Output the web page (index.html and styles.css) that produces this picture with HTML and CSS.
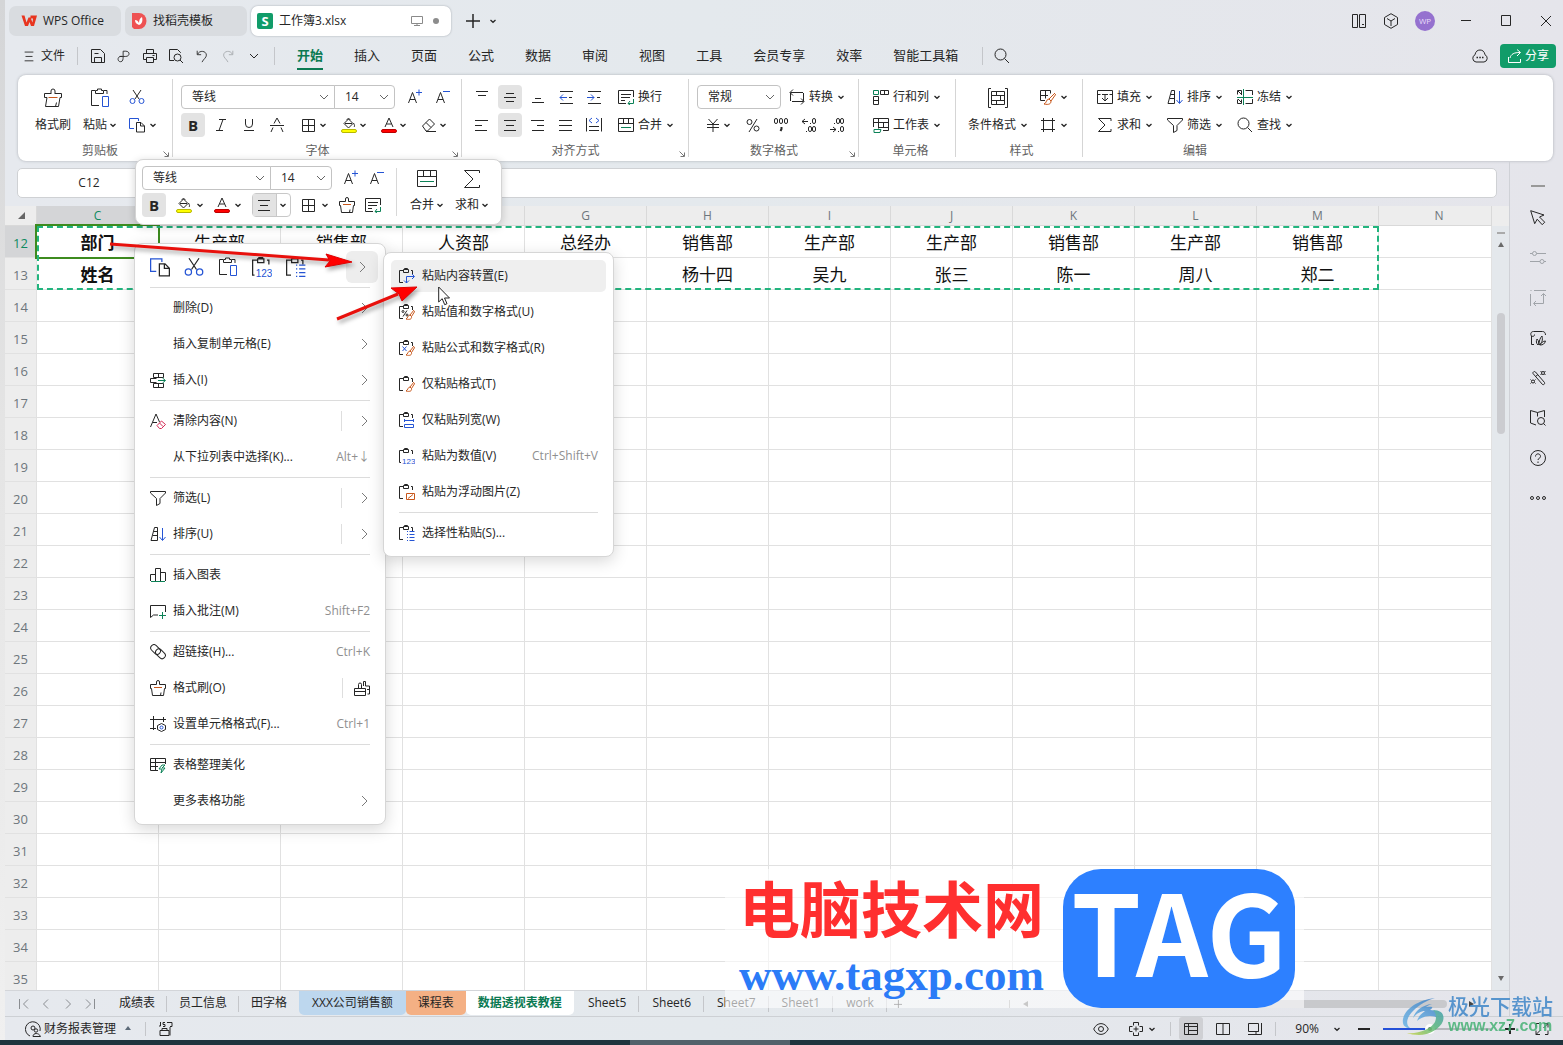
FILE: index.html
```html
<!DOCTYPE html>
<html lang="zh-CN">
<head>
<meta charset="utf-8">
<title>工作簿3.xlsx</title>
<link rel="stylesheet" href="styles.css">
</head>
<body>
<svg class="sprite" aria-hidden="true">
  <symbol id="caret" viewBox="0 0 8 8"><path d="M1.5 3 4 5.3 6.5 3" stroke-width="1.3"/></symbol>
  <symbol id="chev" viewBox="0 0 10 8"><path d="M1 2l4 4 4-4"/></symbol>
  <symbol id="right" viewBox="0 0 8 12"><path d="M2 1l5 5-5 5"/></symbol>
  <symbol id="launch" viewBox="0 0 6 6"><path d="M.5.5l4.500 4.500M5.500 1.500v4h-4"/></symbol>
  <symbol id="brush" viewBox="0 0 20 20"><path d="M8 6V3a2 2 0 0 1 4 0v3M8 5.500H1.500v4H4l-1.500 9h13l1.500-9h1.500v-4H12M12.500 18.500l1-4"/><path class="orange" d="M5.500 9.500h9"/></symbol>
  <symbol id="brush-s" viewBox="0 0 16 16"><path d="M6.500 4.500V2a1.500 1.500 0 0 1 3 0v2.500h6v4h-1l-1 7h-11l-1-7h-1v-4zM10.500 15.500l.5-3"/><path class="orange" d="M4 7.500h8"/></symbol>
  <symbol id="paste" viewBox="0 0 20 20"><path d="M5 2.500H1.500v15H9M14 2.500h3V6M5.500 5.500v-3h2V1h4v1.500h2v3z"/><path class="blue" d="M12.500 8.500h6v10h-6z"/></symbol>
  <symbol id="cut" viewBox="0 0 16 16"><path d="M4 1l6 9M12 1l-6 9"/><g class="blue"><circle cx="3.500" cy="12" r="2.500"/><circle cx="12.500" cy="12" r="2.500"/></g></symbol>
  <symbol id="copy" viewBox="0 0 16 16"><path class="blue" d="M5 11.500H.5v-10h9V4"/><path d="M7.500 5.500H12l3.500 3.500v6h-8zM11.500 5.500V9h4"/></symbol>
  <symbol id="italic" viewBox="0 0 16 16"><path d="M6 2.500h7M3 13.500h7M10 2.500l-4 11"/></symbol>
  <symbol id="under" viewBox="0 0 16 16"><path d="M4.500 2v5a3.500 3.500 0 0 0 7 0V2M3 13.500h10"/></symbol>
  <symbol id="strike" viewBox="0 0 16 16"><path d="M1 8.500h14M5 6.500 8 1 11 6.500M4 10.500 2 15M12 10.500l2 4.500"/></symbol>
  <symbol id="grid4" viewBox="0 0 16 16"><path d="M1.500 2.500h12v12h-12zM7.500 2.500v12M1.500 8.500h12"/></symbol>
  <symbol id="fill" viewBox="0 0 16 16"><path d="M3 6.500 7.500 2 12 6.500 7.500 11zM4 6.500h7M6 3c0-2 3-2 3 0M12.500 6c1 2 1.500 3 .5 4"/><rect x=".5" y="12.500" width="15" height="3" rx="1.500" fill="#ff0" stroke="#b8b800"/></symbol>
  <symbol id="color" viewBox="0 0 16 16"><path d="M4 10l4-9 4 9M5.500 7h5"/><rect x=".5" y="12.500" width="15" height="3" rx="1.500" fill="red" stroke="#b00"/></symbol>
  <symbol id="eraser" viewBox="0 0 16 16"><path d="M1.500 9 8.500 2l5 5-7 7H5zM5 5.500l5 5M5 14.500h10"/></symbol>
  <symbol id="aplus" viewBox="0 0 16 16"><path d="M1.500 14 5.500 3.500 9.500 14M3 10.500h5"/><path class="blue" d="M9 3.500h6M12 .5v6"/></symbol>
  <symbol id="aminus" viewBox="0 0 16 16"><path d="M1.500 14 5.500 3.500 9.500 14M3 10.500h5"/><path class="blue" d="M8 2.500h7"/></symbol>
  <symbol id="vtop" viewBox="0 0 16 16"><path d="M2 2.500h12M4 6.500h8"/></symbol>
  <symbol id="vmid" viewBox="0 0 16 16"><path d="M4 4.500h8M2 8.500h12M4 12.500h8"/></symbol>
  <symbol id="vbot" viewBox="0 0 16 16"><path d="M5 9.500h6M2 13.500h12"/></symbol>
  <symbol id="outdent" viewBox="0 0 16 16"><path d="M2 2.500h13M2 14.500h13M11 8.500h3"/><path class="blue" d="M9 8.500H2M5 5.500l-3 3 3 3"/></symbol>
  <symbol id="indent" viewBox="0 0 16 16"><path d="M2 2.500h13M2 14.500h13M11 8.500h3"/><path class="blue" d="M1 8.500h7M5 5.500l3 3-3 3"/></symbol>
  <symbol id="aleft" viewBox="0 0 16 16"><path d="M1 3.500h13M1 8.500h7M1 13.500h12"/></symbol>
  <symbol id="acenter" viewBox="0 0 16 16"><path d="M2 3.500h12M4 8.500h8M2 13.500h12"/></symbol>
  <symbol id="aright" viewBox="0 0 16 16"><path d="M1 3.500h13M7 8.500h7M2 13.500h12"/></symbol>
  <symbol id="ajust" viewBox="0 0 16 16"><path d="M1 3.500h13M1 8.500h13M1 13.500h13"/></symbol>
  <symbol id="adist" viewBox="0 0 16 16"><path d="M.5 1v13.500M15.500 1v13.500M3 9.500h10M3 13.500h10"/><path class="blue" d="M6 1 3 3.500 6 6M10 1l3 2.500L10 6"/></symbol>
  <symbol id="wrap" viewBox="0 0 16 16"><path d="M8 14.500H.5v-13h15V8M3 5.500h10M3 8.500h9M3 11.500h4"/><path class="green" d="M15.500 10v4.500H10M12 12l-2 2.500 2 1.500"/></symbol>
  <symbol id="merge" viewBox="0 0 16 16"><path d="M.5 1.500h15v13H.5zM.5 6.500h15M5.500 1.500v5M10.500 1.500v5"/><path class="green" d="M3 10.500h10"/></symbol>
  <symbol id="merge-l" viewBox="0 0 20 20"><path d="M.5 1.500h19v16H.5zM.5 7.500h19M6.500 1.500v6M13.500 1.500v6"/><path class="green" d="M3 12.500h14"/></symbol>
  <symbol id="sum-l" viewBox="0 0 20 20"><path d="M17.500 4V1.500h-15L11 10l-8.500 8.500h15V16"/></symbol>
  <symbol id="convert" viewBox="0 0 16 16"><path d="M1.500 12V3.500H14M4 .5l-3 3 3 3M14.500 4v8.500H3M12 9.500l3 3-3 3"/></symbol>
  <symbol id="yen" viewBox="0 0 16 16"><path d="M3.500 2 8 7l4.500-5M8 7v8M2 7.500h12M2 10.500h12"/></symbol>
  <symbol id="percent" viewBox="0 0 16 16"><circle cx="4.500" cy="5" r="2.500"/><circle cx="11.500" cy="11.500" r="2.500"/><path d="M12 2 4 15"/></symbol>
  <symbol id="comma" viewBox="0 0 16 16"><rect x="1.500" y="1.500" width="3" height="5" rx="1.500"/><rect x="6.500" y="1.500" width="3" height="5" rx="1.500"/><rect x="11.500" y="1.500" width="3" height="5" rx="1.500"/><path d="M8.500 10v2L7.500 14" stroke-width="2"/></symbol>
  <symbol id="decup" viewBox="0 0 16 16"><path d="M1 4.500h6M4 2 1 4.500 4 7M9.500 6v1"/><rect x="11.500" y="1.500" width="3" height="5" rx="1.500"/><path d="M5.500 14v1"/><rect x="7.500" y="9.500" width="3" height="5" rx="1.500"/><rect x="11.500" y="9.500" width="3" height="5" rx="1.500"/></symbol>
  <symbol id="decdn" viewBox="0 0 16 16"><path d="M1 12.500h6M4 10l3 2.500L4 15M9.500 14v1M5.500 6v1"/><rect x="11.500" y="9.500" width="3" height="5" rx="1.500"/><rect x="7.500" y="1.500" width="3" height="5" rx="1.500"/><rect x="11.500" y="1.500" width="3" height="5" rx="1.500"/></symbol>
  <symbol id="rowcol" viewBox="0 0 16 16"><path d="M7.500 1.500h8v4h-8zM11.500 1.500v4M.5 7.500h5v8H.5zM.5 11.500h5"/><path class="green" d="M.5 1.500h5v4h-5z"/></symbol>
  <symbol id="sheet" viewBox="0 0 16 16"><path d="M.5 10V1.500h15v12H10M.5 5.500h15M5.500 1.500v10M10.500 5.500v5M5 10.500h10"/><path class="green" d="M1 12.500h7l-1 3H1z"/></symbol>
  <symbol id="cond" viewBox="0 0 20 20"><path d="M3 .5H.5v19H3M17 .5h2.500v19H17M3.500 3.500h13v13h-13zM3.500 7.500h13M3.500 12.500h13M8.500 3.500v4M12.500 7.500v5M8.500 12.500v4"/></symbol>
  <symbol id="tstyle" viewBox="0 0 16 16"><path d="M5 11.500H.5v-10h10v3M.5 6.500H8M5.500 1.500v8"/><path class="orange" d="M15 4 9 10l2 2 5-7M9 10c-3 0-2 4-5 5 5 1 7 0 7-3"/></symbol>
  <symbol id="frame" viewBox="0 0 16 16"><path d="M3.500 1v14M12.500 1v14M1 3.500h14M1 12.500h14"/></symbol>
  <symbol id="fillin" viewBox="0 0 16 16"><path d="M.5 1.500h15v13H.5zM.5 5.500h3M12.500 5.500h3M5 5.500h6M8 5.500V12M5 9l3 3 3-3"/></symbol>
  <symbol id="sort" viewBox="0 0 16 16"><path d="M1 14.500 4.500 1.500h3v13zM3 9.500h4.500M4 5.500h3.500"/><path class="blue" d="M12.500 2v12M9.500 11l3 3.500 3-3.500"/></symbol>
  <symbol id="freeze" viewBox="0 0 16 16"><path d="M8.500 1.500h7V6M15.500 10v4.500h-7M1 2l4 4M1 10l4 4M.5 5.500v-4h4v4M.5 10.500v4h4v-4"/><path class="green" d="M6.500 0v16M0 8.500h16"/></symbol>
  <symbol id="sum" viewBox="0 0 16 16"><path d="M14 4V1.500H1.500L8 8l-6.500 6.500H14V12"/></symbol>
  <symbol id="filter" viewBox="0 0 16 16"><path d="M.5 1.500h15V3L10 8.500v5l-3.500 2v-7L.5 3z"/></symbol>
  <symbol id="find" viewBox="0 0 16 16"><circle cx="6.500" cy="6.500" r="5.500"/><path d="M10.500 10.500 15 15"/></symbol>
  <symbol id="save" viewBox="0 0 16 16"><path d="M1.500 1.500h9l4 4v9h-13zM4.500 14.500v-5h7v5M4.500 5.500h4"/></symbol>
  <symbol id="pdf" viewBox="0 0 16 16"><path d="M6 8.500c-6-1-6 6-2 6 3 0 3-3 3-6V2.500h3c5 0 5 6 0 6H3"/></symbol>
  <symbol id="print" viewBox="0 0 16 16"><path d="M4.500 5V1.500h7V5M4 11.500H1.500v-6h13v6H12M4.500 9.500h7v5h-7zM10.500 7.500h2"/></symbol>
  <symbol id="preview" viewBox="0 0 16 16"><path d="M6 12.500H1.500v-11h8l3 3V5"/><circle cx="9.500" cy="9.500" r="3.500"/><path d="M12 12l3 3"/></symbol>
  <symbol id="undo" viewBox="0 0 16 16"><path d="M2.500 2v4.500H7M3 6c2-5 10-4 10 1 0 3-3 4-5 8"/></symbol>
  <symbol id="pclip" viewBox="0 0 16 16"><path d="M4 2.500H.5v12H4M12 2.500h1.500V6M4.500 4.500v-3h5v3zM5.500 1.500V.5h3v1"/></symbol>
  <symbol id="p-turn" viewBox="0 0 16 16"><use href="#pclip"/><path class="blue" d="M7.500 15V8.500H15M13 6l2.500 2.500L13 11M5 12.500 7.500 15 10 12.500"/></symbol>
  <symbol id="brushlet" viewBox="0 0 16 16"><path class="orange" d="M15 6l-4 5 1.500 1.500L16 7M11 11c-2 0-2 3-4 4 4 1 6 0 5.500-2.500"/></symbol>
  <symbol id="p-pct" viewBox="0 0 16 16"><use href="#pclip"/><use href="#brushlet"/><path d="M8 6.500l-4 6"/><circle cx="4" cy="7.500" r="1"/><circle cx="8" cy="11" r="1"/></symbol>
  <symbol id="p-fx" viewBox="0 0 16 16"><use href="#pclip"/><use href="#brushlet"/><path class="blue" d="M3.500 6.500l4 4.500M7.500 6.500l-4 4.500"/></symbol>
  <symbol id="p-fmt" viewBox="0 0 16 16"><use href="#pclip"/><use href="#brushlet"/></symbol>
  <symbol id="p-col" viewBox="0 0 16 16"><use href="#pclip"/><path class="blue" d="M5.500 7v3M14.500 7v3M5.500 8.500h9M5.500 12.500h9v3h-9z"/></symbol>
  <symbol id="p-123" viewBox="0 0 16 16"><path d="M2 14.500H.5v-12H4M12 2.500h1.500V6M4.500 4.500v-3h5v3zM5.500 1.500V.5h3v1"/><text class="digits" x="3" y="16">123</text></symbol>
  <symbol id="p-img" viewBox="0 0 16 16"><use href="#pclip"/><path class="orange" d="M7.500 9.500h8v6h-8zM9 14.500l5-4"/></symbol>
  <symbol id="p-list" viewBox="0 0 16 16"><use href="#pclip"/><path class="blue" d="M8 6.500h1M10.500 6.500h5M8 9.500h1M10.500 9.500h5M8 12.500h1M10.500 12.500h5M8 15.500h1M10.500 15.500h5"/></symbol>
  <symbol id="insert" viewBox="0 0 16 16"><path d="M8 5.500H3.500v-4h10v4H8zM8.500 1.500v4M6.500 10.500h-6v-4h6M3.500 11.500h10v4h-10zM8.500 11.500v4"/><path class="green" d="M8 8.500h7M12.500 6l3 2.500-3 2.500"/></symbol>
  <symbol id="clear" viewBox="0 0 16 16"><path d="M.5 14 6 1l3.500 8M3 9.500h4"/><path class="red" d="M7 12.500 11.500 8l4 3.500-4 4H9.500zM9.500 10l3.500 3.500"/></symbol>
  <symbol id="chart" viewBox="0 0 16 16"><path d="M.5 14V7.500h5M5.500 14V1.500h5V14M10.500 5.500h5V14"/><path class="green" d="M1 14.500h14"/></symbol>
  <symbol id="note" viewBox="0 0 16 16"><path d="M15.500 9V2.500H.5v12l3-2.500H8"/><path class="green" d="M9 12.500h7M12.500 9v7"/></symbol>
  <symbol id="link" viewBox="0 0 16 16"><rect x="-1" y="2" width="11" height="6.500" rx="3.250" transform="rotate(45 4 5) translate(1 -1)"/><rect x="5" y="7" width="11" height="6.500" rx="3.250" transform="rotate(45 11 10)"/></symbol>
  <symbol id="brushes" viewBox="0 0 16 16"><path d="M.5 8.500h11v7H.5zM.5 11.500h11M4.500 8.500V4.500a1.500 1.500 0 0 1 3 0v4M9.500 6V1.500h2V6h4v8H13.500M13 9.500h2.500"/></symbol>
  <symbol id="cellfmt" viewBox="0 0 16 16"><path d="M3.500 0v14M0 3.500h16M0 12.500h6M13.500 1v5"/><path d="M11.500 7.500l4 2v4l-4 2-4-2v-4z"/><circle class="blue" cx="11.500" cy="11.500" r="1.500"/></symbol>
  <symbol id="beauty" viewBox="0 0 16 16"><path d="M8 13.500H.5v-12h15V7M.5 5.500h15M.5 9.500H8M5.500 1.500v12"/><path class="green" d="M12 8l-3 4h3l-1 4 4-5h-3l3-3z"/></symbol>
  <symbol id="menu" viewBox="0 0 16 16"><path d="M3 3.500h10M4 8.500h8M3 13.500h10"/></symbol>
  <symbol id="plus" viewBox="0 0 16 16"><path d="M1 8h14M8 1v14" stroke-width="1.500"/></symbol>
  <symbol id="screen" viewBox="0 0 12 12"><path d="M.5 1.500h11v7H.5zM6 8.500v2M3 10.500h6"/></symbol>
  <symbol id="panes" viewBox="0 0 16 16"><path d="M1.500 1.500h5v13h-5zM8.500 1.500h6v13h-6zM11 11.500h2"/></symbol>
  <symbol id="cube" viewBox="0 0 16 16"><path d="M8 .7l6.500 3.800v7L8 15.300 1.500 11.500v-7zM4 5.500 8 8l4-2.500M8 8v5"/></symbol>
  <symbol id="min" viewBox="0 0 16 16"><path d="M3 7.500h10"/></symbol>
  <symbol id="max" viewBox="0 0 16 16"><path d="M3.500 2.500h9v10h-9z"/></symbol>
  <symbol id="close" viewBox="0 0 16 16"><path d="M3 3l10 10M13 3 3 13"/></symbol>
  <symbol id="cloud" viewBox="0 0 16 16"><path d="M4 14a3.800 3.800 0 0 1-1-7.200C3.500 3.500 5.500 2 8 2s4.500 1.500 5 4.800A3.800 3.800 0 0 1 12 14z"/><path d="M4.500 9.500H6M7.300 9.500h1.500M10 9.500h1.500" stroke-width="1.500"/></symbol>
  <symbol id="share" viewBox="0 0 16 16"><path d="M1.500 9v5.500h12V11M3 10c1-4 4-5.500 10-5.500M10 1.500l3.500 3L10 8"/></symbol>
  <symbol id="pointer" viewBox="0 0 16 16"><path d="M.7.7l4 13 2.500-4.500 5 5.500 2.500-2.500L9.500 7l4.500-2z"/></symbol>
  <symbol id="tune" viewBox="0 0 16 16"><path d="M0 3.500h2.500M6.500 3.500H16M0 11.500h10M14 11.500h2"/><circle cx="4.500" cy="3.500" r="2"/><circle cx="12" cy="11.500" r="2"/></symbol>
  <symbol id="axis" viewBox="0 0 16 16"><path d="M.5 4v12M4 .5h12M.5.5h1M13.500 4v9.500H4M11 6l2.500-2.500L16 6M6 11l-2.500 2.500L6 16"/></symbol>
  <symbol id="skin" viewBox="0 0 16 16"><path d="M4 14.500H1.500V6C0 4 1 1.500 3.500 1.500h9C14.500 1.500 15.500 3 15.500 5M1.500 6c2 1 3 0 3-1.500M8 15c-2-2-2-4-1-6 2 2 2 4 1 6zM9 15c0-4 1-7 3-9 1 4 0 7-3 9zM10 15c1-2 3-4 5.500-4-1 3-2.500 4-5.500 4z"/></symbol>
  <symbol id="wand" viewBox="0 0 16 16"><path d="M3 3.500a1.500 1.500 0 0 1 2.500-1.500l9 10.500a1.500 1.500 0 0 1-2 2zM5.500 6.500l2.500-2"/><circle cx="13" cy="3" r="1.500"/><circle cx="3" cy="11.500" r="1.500"/><path d="M10.500 1l1 1M15.500 1l-1 1M10.500 5l1-1M15.500 5l-1-1M.5 9.500l1 1M5.500 9.500l-1 1M.5 13.500l1-1M5.500 13.500l-1-1"/></symbol>
  <symbol id="book" viewBox="0 0 16 16"><path d="M6 15 .5 13V.5L7.500 2.500v4M7.500 2.500l7-2V7"/><circle cx="11" cy="11" r="3.500"/><path d="M13.500 13.500l2 2"/></symbol>
  <symbol id="help" viewBox="0 0 16 16"><circle cx="8" cy="8" r="7.500"/><path d="M5.500 6.500c0-3.500 5-3.500 5 0 0 2-2.500 1.500-2.500 3.500M8 11.500v1.500"/></symbol>
  <symbol id="more" viewBox="0 0 16 16"><circle cx="2" cy="8" r="1.500"/><circle cx="8" cy="8" r="1.500"/><circle cx="14" cy="8" r="1.500"/></symbol>
  <symbol id="eye" viewBox="0 0 16 16"><path d="M.7 8C4 .8 12 .8 15.300 8 12 15.200 4 15.200.7 8z"/><circle cx="8" cy="8" r="2.500"/></symbol>
  <symbol id="cross" viewBox="0 0 16 16"><path d="M5.500 4.500v-3h5v3M5.500 11.500v3h5v-3M4.500 5.500h-3v5h3M11.500 5.500h3v5h-3M8 5.500v5M5.500 8h5"/></symbol>
  <symbol id="vnorm" viewBox="0 0 16 16"><path d="M1.500 2.500h13v11h-13zM1.500 5.500h13M5.500 2.500v11M5.500 9.500h9"/></symbol>
  <symbol id="vpage" viewBox="0 0 16 16"><path d="M1.500 2.500h13v11h-13zM8 2.500v11"/></symbol>
  <symbol id="vread" viewBox="0 0 16 16"><path d="M1.500 2.500h10v8h-10zM14.500 2v11.500H1M9 13.500v-3h2.500"/></symbol>
  <symbol id="full" viewBox="0 0 16 16"><path d="M10 2.500h4v4M14 2.500 9.500 7M6 13.500H2v-4M2 13.500 6.500 9M2 6.500v-4h3M14 9.500v4h-3"/></symbol>
  <symbol id="finance" viewBox="0 0 16 16"><path d="M5 15A7.400 7.400 0 1 1 15 10"/><circle cx="8" cy="7" r="2"/><circle cx="11" cy="9.500" r="1.700"/><path d="M8 15.500c0-4 6-4 7.500 0z"/></symbol>
  <symbol id="js" viewBox="0 0 16 16"><path d="M3.500 1v4H2M8 1.500H6v2h2v2H6M10 1.500h5v4h-2M13 6v8.500M3 14.500h9v-5H3zM5 9.500V7.500h5v2"/></symbol>
</svg>

<div class="app">
  <header class="titlebar">
    <a class="tab" href="#"><svg class="i" viewBox="0 0 16 16"><path d="M.5 2.500h3l2 7 2-5h2l2 5 .5-4h-2.500V2.500H16L13 13h-3L8.500 9 7 13H4z" fill="#e8351f" stroke="none"/></svg>WPS Office</a>
    <a class="tab tab-dk" href="#"><svg class="i" viewBox="0 0 16 16"><path d="M1 0h7a7.500 8 0 0 1 0 16H3l-2-2z" fill="#ee5253" stroke="none"/><path d="M8 12C5 11 4 9 4 7c2 0 3 1 4 3 0-3 1-5 3-6 1 4 0 7-3 8z" fill="#fff" stroke="none"/></svg>找稻壳模板</a>
    <a class="tab tab-on" href="#"><b class="s-logo">S</b><span class="grow">工作簿3.xlsx</span><svg class="i i12 mute"><use href="#screen"/></svg><i class="dot"></i></a>
    <button class="ib new" aria-label="新建"><svg class="i"><use href="#plus"/></svg></button>
    <button class="ib" aria-label="列表"><svg class="i i8"><use href="#caret"/></svg></button>
    <span class="grow"></span>
    <div class="winbtns">
      <button class="ib" aria-label="分栏"><svg class="i"><use href="#panes"/></svg></button>
      <button class="ib" aria-label="应用"><svg class="i"><use href="#cube"/></svg></button>
      <span class="avatar">WP</span>
    </div>
    <div class="winbtns wide">
      <button class="ib" aria-label="最小化"><svg class="i"><use href="#min"/></svg></button>
      <button class="ib" aria-label="最大化"><svg class="i"><use href="#max"/></svg></button>
      <button class="ib" aria-label="关闭"><svg class="i"><use href="#close"/></svg></button>
    </div>
  </header>

  <nav class="menubar">
    <button class="file"><svg class="i"><use href="#menu"/></svg>文件</button>
    <i class="vr"></i>
    <div class="quick">
      <button class="ib" aria-label="保存"><svg class="i"><use href="#save"/></svg></button>
      <button class="ib" aria-label="输出"><svg class="i i14"><use href="#pdf"/></svg></button>
      <button class="ib" aria-label="打印"><svg class="i"><use href="#print"/></svg></button>
      <button class="ib" aria-label="预览"><svg class="i"><use href="#preview"/></svg></button>
      <button class="ib" aria-label="撤销"><svg class="i i14"><use href="#undo"/></svg></button>
      <button class="ib flip" aria-label="恢复"><svg class="i i14"><use href="#undo"/></svg></button>
      <button class="ib" aria-label="更多"><svg class="i i10"><use href="#chev"/></svg></button>
    </div>
    <i class="vr"></i>
    <div class="tabs">
      <a class="on" href="#">开始</a><a href="#">插入</a><a href="#">页面</a><a href="#">公式</a><a href="#">数据</a><a href="#">审阅</a><a href="#">视图</a><a href="#">工具</a><a href="#">会员专享</a><a href="#">效率</a><a href="#">智能工具箱</a>
    </div>
    <i class="vr"></i>
    <button class="ib search" aria-label="搜索"><svg class="i"><use href="#find"/></svg></button>
    <span class="grow"></span>
    <button class="ib" aria-label="云"><svg class="i"><use href="#cloud"/></svg></button>
    <button class="share"><svg class="i"><use href="#share"/></svg>分享</button>
  </nav>

  <section class="ribbon">
    <div class="group g-clip">
      <div class="ctl">
        <button class="big"><svg class="i i20"><use href="#brush"/></svg><span>格式刷</span></button>
        <button class="big"><svg class="i i20"><use href="#paste"/></svg><span>粘贴<svg class="i i8"><use href="#caret"/></svg></span></button>
        <div class="stack">
          <div class="row"><button class="lb" aria-label="剪切"><svg class="i"><use href="#cut"/></svg></button></div>
          <div class="row"><button class="lb" aria-label="复制"><svg class="i"><use href="#copy"/></svg><svg class="i i8"><use href="#caret"/></svg></button></div>
        </div>
      </div>
      <div class="gl"><span>剪贴板</span><svg class="i i6"><use href="#launch"/></svg></div>
    </div>
    <div class="group g-font">
      <div class="stack">
        <div class="row r4">
          <div class="fields">
            <label class="sel w-font"><select aria-label="字体"><option>等线</option></select><svg class="i i10"><use href="#chev"/></svg></label>
            <label class="sel w-size"><select aria-label="字号"><option>14</option></select><svg class="i i10"><use href="#chev"/></svg></label>
          </div>
          <button class="sq first" aria-label="增大字号"><svg class="i"><use href="#aplus"/></svg></button>
          <button class="sq" aria-label="减小字号"><svg class="i"><use href="#aminus"/></svg></button>
        </div>
        <div class="row r4">
          <button class="sq on bold">B</button>
          <button class="sq" aria-label="倾斜"><svg class="i"><use href="#italic"/></svg></button>
          <button class="sq" aria-label="下划线"><svg class="i"><use href="#under"/></svg></button>
          <button class="sq" aria-label="删除线"><svg class="i"><use href="#strike"/></svg></button>
          <button class="drop" aria-label="边框"><svg class="i"><use href="#grid4"/></svg><svg class="i i8"><use href="#caret"/></svg></button>
          <button class="drop" aria-label="填充颜色"><svg class="i"><use href="#fill"/></svg><svg class="i i8"><use href="#caret"/></svg></button>
          <button class="drop" aria-label="字体颜色"><svg class="i"><use href="#color"/></svg><svg class="i i8"><use href="#caret"/></svg></button>
          <button class="drop" aria-label="清除"><svg class="i"><use href="#eraser"/></svg><svg class="i i8"><use href="#caret"/></svg></button>
        </div>
      </div>
      <div class="gl"><span>字体</span><svg class="i i6"><use href="#launch"/></svg></div>
    </div>
    <div class="group g-align">
      <div class="stack">
        <div class="row r4">
          <button class="sq" aria-label="顶端对齐"><svg class="i"><use href="#vtop"/></svg></button>
          <button class="sq on" aria-label="垂直居中"><svg class="i"><use href="#vmid"/></svg></button>
          <button class="sq" aria-label="底端对齐"><svg class="i"><use href="#vbot"/></svg></button>
          <button class="sq" aria-label="减少缩进"><svg class="i"><use href="#outdent"/></svg></button>
          <button class="sq" aria-label="增加缩进"><svg class="i"><use href="#indent"/></svg></button>
          <button class="lb first"><svg class="i"><use href="#wrap"/></svg>换行</button>
        </div>
        <div class="row r4">
          <button class="sq" aria-label="左对齐"><svg class="i"><use href="#aleft"/></svg></button>
          <button class="sq on" aria-label="水平居中"><svg class="i"><use href="#acenter"/></svg></button>
          <button class="sq" aria-label="右对齐"><svg class="i"><use href="#aright"/></svg></button>
          <button class="sq" aria-label="两端对齐"><svg class="i"><use href="#ajust"/></svg></button>
          <button class="sq" aria-label="分散对齐"><svg class="i"><use href="#adist"/></svg></button>
          <button class="lb first"><svg class="i"><use href="#merge"/></svg>合并<svg class="i i8"><use href="#caret"/></svg></button>
        </div>
      </div>
      <div class="gl"><span>对齐方式</span><svg class="i i6"><use href="#launch"/></svg></div>
    </div>
    <div class="group g-num">
      <div class="stack">
        <div class="row r8">
          <label class="sel w-num"><select aria-label="数字格式"><option>常规</option></select><svg class="i i10"><use href="#chev"/></svg></label>
          <button class="lb"><svg class="i"><use href="#convert"/></svg>转换<svg class="i i8"><use href="#caret"/></svg></button>
        </div>
        <div class="row r4">
          <button class="drop" aria-label="货币"><svg class="i"><use href="#yen"/></svg><svg class="i i8"><use href="#caret"/></svg></button>
          <button class="sq pct" aria-label="百分比"><svg class="i"><use href="#percent"/></svg></button>
          <button class="sq" aria-label="千位分隔"><svg class="i"><use href="#comma"/></svg></button>
          <button class="sq" aria-label="增加小数位"><svg class="i"><use href="#decup"/></svg></button>
          <button class="sq" aria-label="减少小数位"><svg class="i"><use href="#decdn"/></svg></button>
        </div>
      </div>
      <div class="gl"><span>数字格式</span><svg class="i i6"><use href="#launch"/></svg></div>
    </div>
    <div class="group g-cell">
      <div class="stack">
        <div class="row"><button class="lb"><svg class="i"><use href="#rowcol"/></svg>行和列<svg class="i i8"><use href="#caret"/></svg></button></div>
        <div class="row"><button class="lb"><svg class="i"><use href="#sheet"/></svg>工作表<svg class="i i8"><use href="#caret"/></svg></button></div>
      </div>
      <div class="gl"><span>单元格</span></div>
    </div>
    <div class="group g-style">
      <div class="ctl">
        <button class="big"><svg class="i i20"><use href="#cond"/></svg><span>条件格式<svg class="i i8"><use href="#caret"/></svg></span></button>
        <div class="stack">
          <div class="row"><button class="lb" aria-label="表格样式"><svg class="i"><use href="#tstyle"/></svg><svg class="i i8"><use href="#caret"/></svg></button></div>
          <div class="row"><button class="lb" aria-label="单元格样式"><svg class="i"><use href="#frame"/></svg><svg class="i i8"><use href="#caret"/></svg></button></div>
        </div>
      </div>
      <div class="gl"><span>样式</span></div>
    </div>
    <div class="group g-edit">
      <div class="stack">
        <div class="row r14">
          <button class="lb"><svg class="i"><use href="#fillin"/></svg>填充<svg class="i i8"><use href="#caret"/></svg></button>
          <button class="lb"><svg class="i"><use href="#sort"/></svg>排序<svg class="i i8"><use href="#caret"/></svg></button>
          <button class="lb"><svg class="i"><use href="#freeze"/></svg>冻结<svg class="i i8"><use href="#caret"/></svg></button>
        </div>
        <div class="row r14">
          <button class="lb"><svg class="i"><use href="#sum"/></svg>求和<svg class="i i8"><use href="#caret"/></svg></button>
          <button class="lb"><svg class="i"><use href="#filter"/></svg>筛选<svg class="i i8"><use href="#caret"/></svg></button>
          <button class="lb"><svg class="i"><use href="#find"/></svg>查找<svg class="i i8"><use href="#caret"/></svg></button>
        </div>
      </div>
      <div class="gl"><span>编辑</span></div>
    </div>
  </section>

  <div class="work">
    <main class="main">
      <div class="formula">
        <input class="namebox" aria-label="名称框" value="C12">
        <input class="fx" aria-label="编辑栏">
      </div>
      <div class="gridrow">
        <div class="sheet">
          <table>
            <colgroup><col class="c-h"><col class="c"><col class="c"><col class="c"><col class="c"><col class="c"><col class="c"><col class="c"><col class="c"><col class="c"><col class="c"><col class="c"><col></colgroup>
            <thead><tr><th><i class="corner"></i></th><th class="cur">C</th><th>D</th><th>E</th><th>F</th><th>G</th><th>H</th><th>I</th><th>J</th><th>K</th><th>L</th><th>M</th><th>N</th></tr></thead>
            <tbody>
            <tr><th class="cur">12</th><td class="b">部门</td><td>生产部</td><td>销售部</td><td>人资部</td><td>总经办</td><td>销售部</td><td>生产部</td><td>生产部</td><td>销售部</td><td>生产部</td><td>销售部</td><td></td></tr>
            <tr><th>13</th><td class="b">姓名</td><td></td><td></td><td></td><td></td><td>杨十四</td><td>吴九</td><td>张三</td><td>陈一</td><td>周八</td><td>郑二</td><td></td></tr>
            <tr><th>14<td><td><td><td><td><td><td><td><td><td><td><td></tr>
            <tr><th>15<td><td><td><td><td><td><td><td><td><td><td><td></tr>
            <tr><th>16<td><td><td><td><td><td><td><td><td><td><td><td></tr>
            <tr><th>17<td><td><td><td><td><td><td><td><td><td><td><td></tr>
            <tr><th>18<td><td><td><td><td><td><td><td><td><td><td><td></tr>
            <tr><th>19<td><td><td><td><td><td><td><td><td><td><td><td></tr>
            <tr><th>20<td><td><td><td><td><td><td><td><td><td><td><td></tr>
            <tr><th>21<td><td><td><td><td><td><td><td><td><td><td><td></tr>
            <tr><th>22<td><td><td><td><td><td><td><td><td><td><td><td></tr>
            <tr><th>23<td><td><td><td><td><td><td><td><td><td><td><td></tr>
            <tr><th>24<td><td><td><td><td><td><td><td><td><td><td><td></tr>
            <tr><th>25<td><td><td><td><td><td><td><td><td><td><td><td></tr>
            <tr><th>26<td><td><td><td><td><td><td><td><td><td><td><td></tr>
            <tr><th>27<td><td><td><td><td><td><td><td><td><td><td><td></tr>
            <tr><th>28<td><td><td><td><td><td><td><td><td><td><td><td></tr>
            <tr><th>29<td><td><td><td><td><td><td><td><td><td><td><td></tr>
            <tr><th>30<td><td><td><td><td><td><td><td><td><td><td><td></tr>
            <tr><th>31<td><td><td><td><td><td><td><td><td><td><td><td></tr>
            <tr><th>32<td><td><td><td><td><td><td><td><td><td><td><td></tr>
            <tr><th>33<td><td><td><td><td><td><td><td><td><td><td><td></tr>
            <tr><th>34<td><td><td><td><td><td><td><td><td><td><td><td></tr>
            <tr><th>35<td><td><td><td><td><td><td><td><td><td><td><td></tr>
            </tbody>
          </table>
          <div class="cursor-cell"></div>
          <div class="ants"></div>
        </div>
        <div class="vscroll"><i class="split"></i><i class="tri up"></i><i class="thumb"></i><i class="tri down"></i></div>
      </div>
      <div class="sheetbar">
        <div class="nav">
          <button class="ib" aria-label="首个"><svg class="i" viewBox="0 0 16 16"><path d="M3.500 3v10M12 3.500 7.500 8l4.500 4.500"/></svg></button>
          <button class="ib" aria-label="上一个"><svg class="i" viewBox="0 0 16 16"><path d="M10 3.500 5.500 8l4.500 4.500"/></svg></button>
          <button class="ib" aria-label="下一个"><svg class="i" viewBox="0 0 16 16"><path d="M6 3.500 10.500 8 6 12.500"/></svg></button>
          <button class="ib" aria-label="末个"><svg class="i" viewBox="0 0 16 16"><path d="M12.500 3v10M4 3.500 8.500 8 4 12.500"/></svg></button>
        </div>
        <a class="st" href="#">成绩表</a><a class="st" href="#">员工信息</a><a class="st last" href="#">田字格</a><a class="st blue-tab" href="#">XXX公司销售额</a><a class="st orange-tab" href="#">课程表</a><a class="st cur-tab" href="#">数据透视表教程</a><a class="st" href="#">Sheet5</a><a class="st" href="#">Sheet6</a><a class="st" href="#">Sheet7</a><a class="st" href="#">Sheet1</a><a class="st" href="#">work</a>
        <button class="ib add" aria-label="新建工作表"><svg class="i i10" viewBox="0 0 10 10"><path d="M0 5.500h10M5.500 0v10"/></svg></button>
        <div class="hscroll"><i class="hbar"></i><i class="tri left"></i><i class="hthumb"></i><i class="tri rightward"></i></div>
      </div>
    </main>
    <aside class="side">
      <button class="ib" aria-label="收起"><svg class="i" viewBox="0 0 16 16"><path d="M1 8h14" stroke-width="2"/></svg></button>
      <button class="ib" aria-label="选择"><svg class="i"><use href="#pointer"/></svg></button>
      <button class="ib dim" aria-label="属性"><svg class="i"><use href="#tune"/></svg></button>
      <button class="ib dim" aria-label="分析"><svg class="i"><use href="#axis"/></svg></button>
      <button class="ib" aria-label="美化"><svg class="i"><use href="#skin"/></svg></button>
      <button class="ib" aria-label="工具"><svg class="i"><use href="#wand"/></svg></button>
      <button class="ib" aria-label="查阅"><svg class="i"><use href="#book"/></svg></button>
      <button class="ib" aria-label="帮助"><svg class="i"><use href="#help"/></svg></button>
      <button class="ib" aria-label="更多"><svg class="i"><use href="#more"/></svg></button>
    </aside>
  </div>

  <footer class="status">
    <button class="lb fin"><svg class="i"><use href="#finance"/></svg>财务报表管理</button><i class="tri small"></i>
    <i class="vr"></i>
    <button class="ib" aria-label="脚本"><svg class="i"><use href="#js"/></svg></button>
    <span class="grow"></span>
    <button class="ib s-eye" aria-label="护眼"><svg class="i"><use href="#eye"/></svg></button>
    <button class="lb" aria-label="阅读"><svg class="i"><use href="#cross"/></svg><svg class="i i8"><use href="#caret"/></svg></button>
    <i class="vr"></i>
    <button class="vb on" aria-label="普通"><svg class="i"><use href="#vnorm"/></svg></button>
    <button class="vb" aria-label="分页"><svg class="i"><use href="#vpage"/></svg></button>
    <button class="vb" aria-label="阅读版式"><svg class="i"><use href="#vread"/></svg></button>
    <i class="vr"></i>
    <button class="zoom">90%<svg class="i i8"><use href="#caret"/></svg></button>
    <button class="ib" aria-label="缩小"><svg class="i i12" viewBox="0 0 12 12"><path d="M0 6h12" stroke-width="2"/></svg></button>
    <input class="range" type="range" min="0" max="100" value="43" aria-label="缩放">
    <button class="ib" aria-label="放大"><svg class="i i12" viewBox="0 0 12 12"><path d="M1 6h10M6 1v10" stroke-width="2"/></svg></button>
    <button class="ib s-full" aria-label="全屏"><svg class="i"><use href="#full"/></svg></button>
  </footer>
</div>
<div class="taskbar"><i></i></div>

<div class="minibar">
  <div class="mini-left">
    <div class="row24">
      <div class="fields">
        <label class="sel m-font"><select aria-label="字体"><option>等线</option></select><svg class="i i10"><use href="#chev"/></svg></label>
        <label class="sel m-size"><select aria-label="字号"><option>14</option></select><svg class="i i10"><use href="#chev"/></svg></label>
      </div>
      <button class="sq first" aria-label="增大字号"><svg class="i"><use href="#aplus"/></svg></button>
      <button class="sq" aria-label="减小字号"><svg class="i"><use href="#aminus"/></svg></button>
    </div>
    <div class="row24 r10">
      <button class="sq on bold">B</button>
      <button class="lb" aria-label="填充颜色"><svg class="i"><use href="#fill"/></svg><svg class="i i8"><use href="#caret"/></svg></button>
      <button class="lb" aria-label="字体颜色"><svg class="i"><use href="#color"/></svg><svg class="i i8"><use href="#caret"/></svg></button>
      <button class="splitbtn" aria-label="居中"><span><svg class="i"><use href="#acenter"/></svg></span><svg class="i i8"><use href="#caret"/></svg></button>
      <button class="lb" aria-label="边框"><svg class="i"><use href="#grid4"/></svg><svg class="i i8"><use href="#caret"/></svg></button>
      <button class="lb" aria-label="格式刷"><svg class="i"><use href="#brush-s"/></svg></button>
      <button class="lb" aria-label="换行"><svg class="i"><use href="#wrap"/></svg></button>
    </div>
  </div>
  <i class="mvr"></i>
  <button class="big mbig"><svg class="i i20"><use href="#merge-l"/></svg><span>合并<svg class="i i8"><use href="#caret"/></svg></span></button>
  <button class="big mbig"><svg class="i i20"><use href="#sum-l"/></svg><span>求和<svg class="i i8"><use href="#caret"/></svg></span></button>
</div>

<div class="menu ctx" role="menu">
  <div class="tools">
    <button class="ib" aria-label="复制"><svg class="i i20"><use href="#copy"/></svg></button>
    <button class="ib" aria-label="剪切"><svg class="i i20"><use href="#cut"/></svg></button>
    <button class="ib" aria-label="粘贴"><svg class="i i20"><use href="#paste"/></svg></button>
    <button class="ib" aria-label="粘贴为数值"><svg class="i i20"><use href="#p-123"/></svg></button>
    <button class="ib" aria-label="选择性粘贴"><svg class="i i20"><use href="#p-list"/></svg></button>
    <button class="ib hot" aria-label="更多"><svg class="i i8x12"><use href="#right"/></svg></button>
  </div>
  <hr>
  <button class="mi"><i class="sp"></i><span>删除(D)</span><svg class="i i8x12"><use href="#right"/></svg></button>
  <button class="mi"><i class="sp"></i><span>插入复制单元格(E)</span><svg class="i i8x12"><use href="#right"/></svg></button>
  <button class="mi"><svg class="i"><use href="#insert"/></svg><span>插入(I)</span><svg class="i i8x12"><use href="#right"/></svg></button>
  <hr>
  <button class="mi"><svg class="i"><use href="#clear"/></svg><span>清除内容(N)</span><i class="vr"></i><svg class="i i8x12"><use href="#right"/></svg></button>
  <button class="mi"><i class="sp"></i><span>从下拉列表中选择(K)...</span><kbd>Alt+↓</kbd></button>
  <hr>
  <button class="mi"><svg class="i"><use href="#filter"/></svg><span>筛选(L)</span><i class="vr"></i><svg class="i i8x12"><use href="#right"/></svg></button>
  <button class="mi"><svg class="i"><use href="#sort"/></svg><span>排序(U)</span><i class="vr"></i><svg class="i i8x12"><use href="#right"/></svg></button>
  <hr>
  <button class="mi"><svg class="i"><use href="#chart"/></svg><span>插入图表</span></button>
  <button class="mi"><svg class="i"><use href="#note"/></svg><span>插入批注(M)</span><kbd>Shift+F2</kbd></button>
  <hr>
  <button class="mi"><svg class="i"><use href="#link"/></svg><span>超链接(H)...</span><kbd>Ctrl+K</kbd></button>
  <button class="mi"><svg class="i"><use href="#brush-s"/></svg><span>格式刷(O)</span><i class="vr"></i><svg class="i end"><use href="#brushes"/></svg></button>
  <button class="mi"><svg class="i"><use href="#cellfmt"/></svg><span>设置单元格格式(F)...</span><kbd>Ctrl+1</kbd></button>
  <hr>
  <button class="mi"><svg class="i"><use href="#beauty"/></svg><span>表格整理美化</span></button>
  <button class="mi"><i class="sp"></i><span>更多表格功能</span><svg class="i i8x12"><use href="#right"/></svg></button>
</div>

<div class="menu sub" role="menu">
  <button class="mi hot"><svg class="i"><use href="#p-turn"/></svg><span>粘贴内容转置(E)</span></button>
  <button class="mi"><svg class="i"><use href="#p-pct"/></svg><span>粘贴值和数字格式(U)</span></button>
  <button class="mi"><svg class="i"><use href="#p-fx"/></svg><span>粘贴公式和数字格式(R)</span></button>
  <button class="mi"><svg class="i"><use href="#p-fmt"/></svg><span>仅粘贴格式(T)</span></button>
  <button class="mi"><svg class="i"><use href="#p-col"/></svg><span>仅粘贴列宽(W)</span></button>
  <button class="mi"><svg class="i"><use href="#p-123"/></svg><span>粘贴为数值(V)</span><kbd>Ctrl+Shift+V</kbd></button>
  <button class="mi"><svg class="i"><use href="#p-img"/></svg><span>粘贴为浮动图片(Z)</span></button>
  <hr>
  <button class="mi"><svg class="i"><use href="#p-list"/></svg><span>选择性粘贴(S)...</span></button>
</div>

<svg class="arrows" viewBox="0 0 360 100" aria-hidden="true">
  <path d="M10 13 229 29" stroke="#e8100c" stroke-width="3"/>
  <path d="M226 23 252 31 225 36 230 30z" fill="#f00" stroke="#d00"/>
  <path d="M237 88 298 63" stroke="#e8100c" stroke-width="3"/>
  <path d="M291 57 317 56 302 70 299 63z" fill="#f00" stroke="#d00"/>
</svg>
<svg class="mouse" viewBox="0 0 12 20" aria-hidden="true"><path d="M.7 1v15l3.500-3.300 2.500 6 2.300-1-2.500-5.700h5z" fill="#fff" stroke="#222"/></svg>

<div class="mark">
  <div class="mark-text"><strong>电脑技术网</strong><span>www.tagxp.com</span></div>
  <div class="tag">TAG</div>
</div>

<div class="logo">
  <svg viewBox="0 0 46 44" aria-hidden="true">
    <defs><linearGradient id="lg" x1="1" y1="0" x2="0" y2="1"><stop offset="0" stop-color="#3d7fc4"/><stop offset="1" stop-color="#6bb5e6"/></linearGradient>
    <linearGradient id="lg2" x1="1" y1="0" x2="0" y2="1"><stop offset="0" stop-color="#3f9fb0"/><stop offset=".5" stop-color="#5cb878"/><stop offset="1" stop-color="#cfd64a"/></linearGradient></defs>
    <path d="M33 4C16 6 3 15 1 25c-1 6 2 9 7 9C3 30 5 23 11 17 17 11 25 6 33 4z" fill="url(#lg)"/>
    <path d="M30 10C20 11 13 17 11 24c4-5 8-7 12-7-4 3-7 6-8 10 3-3 8-5 13-5 6 0 8 2 8 5 3-5 1-11-8-11 4-3 3-4-4-3 1-1 3-2 6-3z" fill="url(#lg)"/>
    <path d="M31 16c8 0 12 4 10 11-3 8-14 14-24 14-5 0-9-1-12-2 12 1 24-4 28-11 2-5 1-9-2-12z" fill="url(#lg2)"/>
  </svg>
  <div><b>极光下载站</b><span>www.xz7.com</span></div>
</div>
</body>
</html>
```
FILE: styles.css
```css
* { box-sizing: border-box; }
html, body { height: 100%; }
body {
  margin: 0;
  display: flex;
  flex-direction: column;
  position: relative;
  overflow: hidden;
  background: linear-gradient(#d4d5d7, #e4e4e4 40%, #f0f0f0);
  font: 12px/18px "Open Sans", "Noto Sans CJK SC", sans-serif;
  color: #262626;
}
button, input, select {
  font: inherit;
  color: inherit;
  border: 0;
  padding: 0;
  margin: 0;
  background: none;
  white-space: nowrap;
}
a { color: inherit; text-decoration: none; white-space: nowrap; }
.sprite { position: absolute; width: 0; height: 0; }
.i { width: 16px; height: 16px; flex: none; fill: none; stroke: currentColor; stroke-width: 1; display: block; }
.i6 { width: 6px; height: 6px; }
.i8 { width: 8px; height: 8px; }
.i10 { width: 10px; height: 8px; }
.i12 { width: 12px; height: 12px; }
.i14 { width: 14px; height: 14px; }
.i20 { width: 20px; height: 20px; }
.i8x12 { width: 8px; height: 12px; color: #7a7a7a; }
.blue { stroke: #2554d4; }
.green { stroke: #0c8257; }
.orange { stroke: #c8571b; }
.red { stroke: #d42a55; }
.digits { font: 8px "Liberation Sans", sans-serif; fill: #2554d4; stroke: none; }
.grow { flex: 1; }
.ib { display: flex; align-items: center; justify-content: center; }
.vr { width: 1px; height: 18px; background: #c4c6ca; flex: none; }

/* window */
.app {
  flex: 1;
  min-height: 0;
  margin-left: 5px;
  display: flex;
  flex-direction: column;
  background: linear-gradient(90deg, #e6e9ee, #e4e9ed 45%, #e5e5eb);
}
.taskbar { height: 5px; background: #1f333d; padding-left: 630px; }
.taskbar i { display: block; width: 160px; height: 5px; background: #52616a; }

/* title bar */
.titlebar { height: 40px; display: flex; align-items: center; padding: 1px 5px 0 4px; }
.tab {
  height: 30px;
  width: 112px;
  margin-right: 4px;
  padding: 0 12px;
  display: flex;
  align-items: center;
  gap: 6px;
  border-radius: 7px;
  background: #d9dce0;
}
.tab-dk { width: 122px; padding-left: 6px; }
.tab-on { width: 200px; padding-left: 6px; background: #fff; box-shadow: 0 0 2px #9aa0a8; }
.s-logo { width: 16px; height: 16px; border-radius: 2px; background: #119c69; color: #fff; font-size: 13px; line-height: 16px; text-align: center; }
.mute { color: #8a8a8a; }
.dot { width: 6px; height: 6px; border-radius: 3px; background: #8c8c8c; margin-left: 4px; }
.new { margin: 0 8px 0 10px; }
.winbtns { display: flex; gap: 16px; align-items: center; }
.wide { gap: 24px; margin: 0 4px 0 23px; }
.avatar {
  width: 20px;
  height: 20px;
  border-radius: 10px;
  background: #9571cf;
  color: #e8defa;
  font-size: 8px;
  line-height: 20px;
  text-align: center;
}

/* menu bar */
.menubar { height: 35px; padding: 0 7px 4px 16px; display: flex; align-items: center; }
.file { display: flex; align-items: center; gap: 4px; margin-right: 12px; }
.file .i { height: 14px; }
.quick { display: flex; margin: 0 7px; }
.quick .ib { width: 26px; }
.flip { transform: scaleX(-1); color: #a6a9ad; }
.tabs { display: flex; gap: 31px; margin: 0 24px 0 22px; font-size: 13px; line-height: 26px; }
.tabs a { height: 28px; }
.tabs .on { color: #0b7a52; font-weight: 700; border-bottom: 2px solid #0b7a52; }
.search { margin-left: 11px; }
.share {
  width: 56px;
  height: 24px;
  margin-left: 12px;
  display: flex;
  align-items: center;
  justify-content: center;
  gap: 2px;
  border-radius: 4px;
  background: #119c69;
  color: #fff;
}

/* ribbon */
.ribbon {
  height: 86px;
  margin: 0 10px 0 13px;
  display: flex;
  background: #fff;
  border-radius: 8px;
  box-shadow: 0 0 3px #a9adb3;
}
.group { padding: 8px 0 0 8px; position: relative; flex: none; }
.group + .group::before { content: ""; position: absolute; left: -1px; top: 4px; width: 1px; height: 78px; background: #d5d5d5; }
.g-clip { width: 155px; padding-left: 17px; }
.g-font { width: 289px; }
.g-align { width: 227px; }
.g-num { width: 170px; }
.g-cell { width: 97px; padding-left: 14px; }
.g-style { width: 127px; padding-left: 12px; }
.g-edit { width: 218px; padding-left: 14px; }
.ctl { display: flex; gap: 12px; }
.row { height: 28px; display: flex; align-items: center; }
.r4 { gap: 4px; }
.r8 { gap: 8px; }
.r14 { gap: 14px; }
.big { height: 56px; padding-top: 5px; display: flex; flex-direction: column; align-items: center; gap: 8px; }
.big span { display: flex; align-items: center; gap: 2px; }
.g-style .big span { gap: 4px; }
.lb { display: flex; align-items: center; gap: 4px; }
.sq { width: 24px; height: 24px; display: flex; align-items: center; justify-content: center; border-radius: 4px; }
.sq.on { background: #e3e3e3; }
.bold { font: 700 15px/24px "Open Sans", sans-serif; }
.first { margin-left: 8px; }
.sq.first, .pct { margin-left: 4px; }
.drop { width: 36px; height: 24px; padding-right: 2px; display: flex; align-items: center; justify-content: flex-end; gap: 2px; }
.gl { height: 24px; margin-left: -8px; display: grid; grid-template-columns: 1fr auto 1fr; align-items: center; color: #616161; }
.gl span { grid-column: 2; }
.gl .i { justify-self: end; margin: 6px 4px 0 0; color: #777; }
.fields { display: flex; }
.sel { display: grid; align-items: center; height: 24px; border: 1px solid #c3c3c3; background: #fff; border-radius: 4px; }
.sel select { grid-area: 1 / 1; appearance: none; height: 22px; padding-left: 10px; width: 100%; outline: 0; }
.sel .i { grid-area: 1 / 1; justify-self: end; margin-right: 5px; pointer-events: none; color: #666; }
.fields .sel:first-child { border-radius: 4px 0 0 4px; }
.fields .sel:last-child { border-radius: 0 4px 4px 0; margin-left: -1px; }
.w-font { width: 154px; }
.w-size { width: 61px; }
.w-num { width: 84px; }

/* work area */
.work { flex: 1; min-height: 0; display: flex; }
.main { flex: 1; min-width: 0; display: flex; flex-direction: column; padding-top: 7px; }
.formula {
  height: 30px;
  flex: none;
  margin: 0 12px 8px;
  display: flex;
  background: #fff;
  border: 1px solid #cfd1d4;
  border-radius: 5px;
}
.namebox { width: 142px; text-align: center; }
.fx { flex: 1; }
.gridrow { flex: 1; min-height: 0; display: flex; background: #ededed; }
.sheet { flex: 1; min-width: 0; position: relative; overflow: hidden; background: #fff; }
table { width: 100%; table-layout: fixed; border-spacing: 0; }
.c-h { width: 32px; }
.c { width: 122px; }
th, td { padding: 0; border: 0 solid #e1e1e1; border-width: 0 1px 1px 0; text-align: center; white-space: nowrap; }
th { background: #ededed; color: #6d767c; font-weight: 400; font-size: 12px; }
tbody th { font-size: 13px; padding-top: 2px; }
thead th { height: 20px; line-height: 19px; border-color: #d9d9d9; }
thead th:last-child { padding-left: 8px; }
tbody tr { height: 32px; }
td { font-size: 17px; line-height: 28px; padding-top: 2px; color: #111; }
.b { font-weight: 700; }
th.cur { background: #d4d5d7; color: #0f8a5f; }
.corner { display: block; width: 0; height: 0; margin-left: 13px; border-left: 7px solid transparent; border-bottom: 7px solid #666; }
.cursor-cell { position: absolute; left: 30px; top: 18px; width: 125px; height: 35px; border: 2px solid #3d8b1f; }
.ants { position: absolute; left: 32px; top: 20px; width: 1342px; height: 64px; border: 2px dashed #22b47e; }
.vscroll { width: 17px; margin-top: 20px; display: flex; flex-direction: column; align-items: center; background: #e4e8ec; }
.split { width: 8px; height: 2px; margin-top: 6px; background: #aaa; }
.tri { width: 0; height: 0; border: 3px solid transparent; }
.up { margin-top: 5px; border-bottom: 5px solid #6a6a6a; }
.thumb { width: 8px; height: 121px; margin-top: 66px; border-radius: 4px; background: #cbccd0; }
.down { margin: auto 0 6px; border-top: 5px solid #6a6a6a; }
.side {
  width: 54px;
  padding: 37px 0 0 2px;
  border-left: 1px solid #cfd1d6;
  display: flex;
  flex-direction: column;
  align-items: center;
}
.side .ib { height: 40px; flex: none; }
.side .ib:first-child { height: 24px; margin-top: -24px; color: #999; }
.side .dim { color: #a0a4a9; }

/* sheet tabs */
.sheetbar { height: 26px; flex: none; display: flex; border-top: 1px solid #d3d5d9; }
.nav { display: flex; gap: 6px; margin: 0 9px 0 11px; color: #8a8d91; }
.st { position: relative; height: 24px; padding: 0 12px; line-height: 24px; }
.st::after { content: ""; position: absolute; right: 0; top: 5px; width: 1px; height: 16px; background: #c4c6ca; }
.st.last::after, .blue-tab::after, .orange-tab::after, .cur-tab::after { display: none; }
.blue-tab { background: #bdd7ee; border-radius: 0 0 5px 5px; padding: 0 13px; }
.orange-tab { background: #f4b084; border-radius: 0 0 5px 5px; }
.cur-tab { background: #fff; color: #0b7a52; font-weight: 700; border-radius: 0 0 5px 5px; margin-right: 1px; }
.cur-tab ~ .st { padding: 0 13px; }
.add { margin-left: 6px; }
.hscroll { flex: 1; display: flex; align-items: center; margin: 0 32px 0 106px; }
.hbar { width: 1px; height: 8px; background: #aaa; }
.left { margin: 0 67px 0 10px; border-right: 5px solid #777; }
.hthumb { flex: 1; height: 8px; background: #c8c9cc; border-radius: 4px; }
.rightward { margin-left: 22px; border-left: 5px solid #444; }

/* status bar */
.status { height: 24px; flex: none; padding: 0 13px 0 20px; display: flex; align-items: center; border-top: 1px solid #cdd0d4; }
.fin { gap: 3px; }
.small { margin: 0 14px 4px 9px; border-bottom: 4px solid #5c6a78; }
.status .vr { height: 14px; }
.status .vr + .ib { margin-left: 11px; }
.s-eye { margin-right: 19px; }
.status .lb + .vr { margin-right: 8px; margin-left: 14px; }
.vb { width: 24px; height: 23px; margin-right: 8px; display: flex; align-items: center; justify-content: center; border-radius: 3px; }
.vb.on { background: #cfd0d4; }
.vb + .vr { margin: 0 19px 0 0; }
.zoom { display: flex; align-items: center; gap: 14px; margin-right: 17px; }
.range { appearance: none; width: 108px; height: 12px; margin: 0 13px; background: linear-gradient(90deg, #2450d8 44%, #b5b8bd 44%) center / 100% 2px no-repeat; }
.range::-webkit-slider-thumb { appearance: none; width: 10px; height: 10px; border: 3px solid #fff; border-radius: 5px; background: #666; }
.s-full { margin-left: 18px; }

/* floating toolbar */
.minibar {
  position: absolute;
  left: 135px;
  top: 159px;
  width: 367px;
  height: 66px;
  padding: 6px 0 0 6px;
  display: flex;
  background: #fff;
  border: 1px solid #d4d4d4;
  border-radius: 8px;
  box-shadow: 0 2px 8px rgba(0, 0, 0, .18);
}
.mini-left { display: flex; flex-direction: column; gap: 3px; width: 247px; flex: none; }
.row24 { height: 24px; display: flex; align-items: center; gap: 2px; }
.row24 .first { margin-left: 5px; }
.row24.r10 { gap: 10px; }
.m-font { width: 129px; }
.m-size { width: 62px; }
.splitbtn { display: flex; align-items: center; width: 39px; height: 24px; border: 1px solid #c8c8c8; border-radius: 4px; gap: 2px; }
.splitbtn span { width: 24px; height: 22px; padding: 3px; background: #e3e3e3; border-right: 1px solid #c8c8c8; }
.mvr { flex: none; width: 1px; height: 48px; margin: 2px 13px 0 7px; background: #d8d8d8; }
.mbig { padding-top: 3px; gap: 7px; margin-right: 11px; height: 48px; }

/* menus */
.menu { position: absolute; background: #fff; border: 1px solid #d6d6d6; border-radius: 8px; box-shadow: 0 4px 16px rgba(0, 0, 0, .16); }
.menu hr { height: 1px; margin: 2px 0; border: 0; background: #dcdcdc; }
.mi { width: 100%; height: 36px; display: flex; align-items: center; gap: 7px; text-align: left; }
.mi span { flex: 1; }
.mi kbd { font: inherit; color: #8f8f8f; }
.mi .vr { height: 20px; background: #dedede; margin-right: 11px; }
.mi > .i8x12 { margin-right: 2px; }
.mi .i.end { margin-left: -7px; }
.sp { width: 16px; }
.ctx { left: 134px; top: 243px; width: 252px; padding: 5px 15px; }
.tools { height: 36px; display: flex; align-items: center; gap: 14px; }
.tools .hot { width: 32px; height: 32px; margin: 0 -8px 0 auto; border-radius: 6px; background: #ededed; }
.sub { left: 383px; top: 252px; width: 231px; padding: 5px 15px; }
.sub .hot { position: relative; z-index: 0; }
.sub .hot::before { content: ""; position: absolute; z-index: -1; inset: 2px -8px; border-radius: 5px; background: #efefef; }

/* pointer and arrows lie over everything */
.arrows { position: absolute; left: 100px; top: 231px; width: 360px; height: 100px; fill: none; filter: drop-shadow(2px 3px 2px rgba(0, 0, 0, .35)); pointer-events: none; }
.mouse { position: absolute; left: 438px; top: 286px; width: 12px; height: 20px; }

.mark {
  position: absolute;
  right: 259px;
  bottom: 37px;
  height: 139px;
  width: 579px;
  padding: 0 9px 0 14px;
  display: flex;
  justify-content: space-between;
  background: rgba(255, 255, 255, .6);
}
.mark-text { display: flex; flex-direction: column; }
.mark strong { font: 700 61px/76px "Noto Sans CJK SC", sans-serif; color: #ff2f2f; white-space: nowrap; }
.mark span { font: 700 45px/60px "Liberation Serif", serif; color: #2b7bf7; }
.tag {
  width: 232px;
  border-radius: 38px;
  background: #2d80ff;
  color: #fff;
  font: 700 112px/118px "Noto Sans CJK SC", sans-serif;
  text-align: center;
}
.logo { position: absolute; right: 10px; bottom: 7px; display: flex; opacity: .85; }
.logo svg { width: 46px; height: 44px; }
.logo div { display: flex; flex-direction: column; }
.logo b { font: 500 21px/22px "Noto Sans CJK SC", sans-serif; color: #3f86c8; }
.logo span { font: 700 16px/20px "Liberation Sans", sans-serif; color: #48b276; }
```
